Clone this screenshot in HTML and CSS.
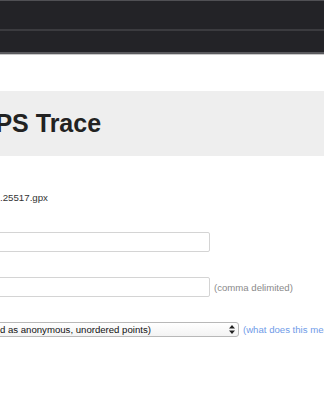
FILE: index.html
```html
<!DOCTYPE html>
<html lang="en">
<head>
    <meta charset="UTF-8">
    <meta name="viewport" content="width=device-width, initial-scale=1.0">
    <title>Edit GPS Trace</title>
    <link rel="stylesheet" href="styles.css">
</head>
<body>
    <div class="chrome">
        <div class="chrome-bar"></div>
        <div class="chrome-tabs"></div>
    </div>

    <div class="content">
        <h1 class="title">GPS Trace</h1>

        <form class="trace-form">
            <div class="row filename">.25517.gpx</div>

            <div class="row">
                <input type="text" class="field" id="description">
            </div>

            <div class="row">
                <input type="text" class="field" id="tags">
                <span class="hint">(comma delimited)</span>
            </div>

            <div class="row">
                <div class="select-wrap">
                    <select class="select" id="visibility">
                        <option>Private (only shared as anonymous, unordered points)</option>
                    </select>
                    <svg class="select-arrows" width="6" height="9" viewBox="0 0 6 9">
                        <path d="M3 0 L6 3.5 L0 3.5 Z M3 9 L6 5.5 L0 5.5 Z" fill="#222"/>
                    </svg>
                </div>
                <a class="help" href="#">(what does this mean?)</a>
            </div>
        </form>
    </div>
</body>
</html>
```

FILE: styles.css
```css
html, body {
    margin: 0;
    padding: 0;
    overflow: hidden;
}

body {
    font-family: "Liberation Sans", Arial, sans-serif;
    background-color: #fff;
    color: #333;
    width: 324px;
}

/* browser chrome on top */
.chrome-bar {
    height: 28px;
    background-color: #232327;
    border-top: 1px solid #505054;
}

.chrome-tabs {
    height: 21px;
    background-color: #232327;
    border-top: 2px solid #3b3b3f;
    border-bottom: 2px solid #5a5a5e;
    box-shadow: 0 1px 0 #c8c8c8;
}

.content {
    padding-top: 37px;
}

.title {
    margin: 0;
    height: 65px;
    line-height: 65px;
    background-color: #eeeeee;
    color: #222;
    font-size: 25px;
    font-weight: bold;
    text-indent: -24px;
    white-space: nowrap;
}

.trace-form {
    display: flex;
    flex-direction: column;
    margin-top: 35px;
}

.row {
    display: flex;
    align-items: center;
    gap: 4px;
    white-space: nowrap;
}

.filename {
    height: 12px;
    font-size: 9.7px;
    color: #333;
    margin-bottom: 29px;
}

.field {
    width: 224px;
    height: 20px;
    box-sizing: border-box;
    margin: 0 0 25px -14px;
    border: 1px solid #d4d4d4;
    border-radius: 2px;
    background: #fff;
    padding: 2px 4px;
    font-size: 10px;
}

.row .field + .hint {
    margin-bottom: 25px;
}

.hint {
    font-size: 9.6px;
    color: #8a8a8a;
}

.select-wrap {
    position: relative;
    display: flex;
    width: 326px;
    margin-left: -87px;
    flex-shrink: 0;
}

.select {
    appearance: none;
    -webkit-appearance: none;
    width: 100%;
    height: 15px;
    box-sizing: border-box;
    border: 1px solid #b8b8b8;
    border-radius: 3px;
    background: linear-gradient(#ffffff, #f3f3f3);
    font-family: "Liberation Sans", Arial, sans-serif;
    font-size: 9.6px;
    color: #111;
    padding: 0 0 0 6px;
    line-height: 13px;
}

.select-arrows {
    position: absolute;
    right: 4px;
    top: 3px;
}

.help {
    font-size: 9.6px;
    color: #6f9be8;
    text-decoration: none;
}
```
